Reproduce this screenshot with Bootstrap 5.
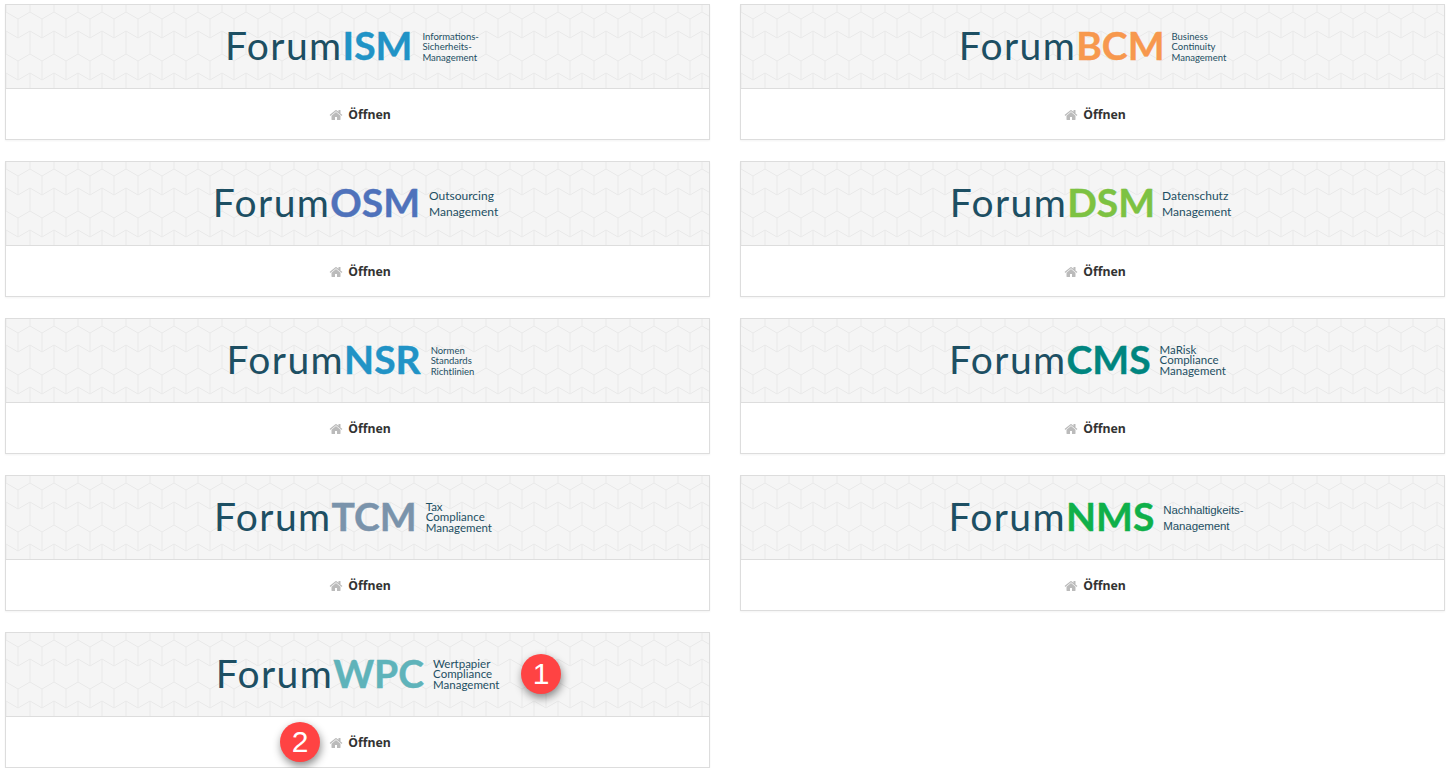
<!DOCTYPE html>
<html lang="de">
<head>
<meta charset="utf-8">
<title>Foren</title>
<link href="https://cdn.jsdelivr.net/npm/bootstrap@5.3.0/dist/css/bootstrap.min.css" rel="stylesheet">
<style>
body{background:#fff;overflow:hidden;font-family:"Noto Sans",sans-serif}
.page-wrap{padding:4px 5px 0}
.page-grid{--bs-gutter-x:30px;--bs-gutter-y:21px}
.forum-card{border:1px solid #ddd;border-radius:0;box-shadow:0 1px 2px rgba(0,0,0,.05)}
.forum-head{height:84px;padding-bottom:2px;background-color:#f5f5f5;border-bottom:1px solid #ddd;background-image:url("data:image/svg+xml,%3Csvg xmlns='http://www.w3.org/2000/svg' width='24' height='42'%3E%3Cpath d='M0 7L12 0L24 7M0 7V26M24 7V26M0 26L12 19L24 26M12 19V42' fill='none' stroke='%23e9e9e9' stroke-width='1'/%3E%3C/svg%3E");background-position:12px 7px}
.forum-foot{height:50px;padding:2px 0 0 5px;font-size:12.3px;font-weight:700;color:#333}
.home-ico{width:14px;height:14px;fill:#bbb;margin-right:5px}
.logo-name{font-family:"Lato",sans-serif;font-size:39px;line-height:1;color:#1d4f63;letter-spacing:1.4px}
.logo-name b{font-weight:700;letter-spacing:0;-webkit-text-stroke:.4px currentColor}
.logo-sub{font-family:"Lato",sans-serif;color:#1d4f63;font-size:9.5px;line-height:10.3px;margin:4px 0 0 10px}
.logo-sub.mid{font-size:11.5px;margin:2px 0 0 9px}
.logo-sub.two{font-size:12px;line-height:16px;margin:2px 0 0 9px}
.logo-sub.arial{font-family:"Liberation Sans",sans-serif;font-size:11.5px;letter-spacing:-.1px}
.logo-sub.tight{margin-left:7px}
.c-ism{color:#2193c6}.c-bcm{color:#f7984e}.c-osm{color:#4f72bb}.c-dsm{color:#7dc242}.c-nsr{color:#2193c6}.c-cms{color:#00857f}.c-tcm{color:#7a93ab}.c-nms{color:#10b04a}.c-wpc{color:#5fb3ba}
.s-ism{padding-right:11px}.s-osm{padding-right:4px}.s-dsm{padding-right:4px}.s-nsr{padding-right:14px}.s-cms{padding-right:10px}.s-tcm{padding-right:9px}.s-nms{padding-left:7px}
.step-dot{position:absolute;width:40px;height:40px;border-radius:50%;background:#ff4343;color:#fff;font-family:"Liberation Sans",sans-serif;font-size:30px;line-height:40px;text-align:center;box-shadow:1px 4px 8px rgba(0,0,0,.45)}
.dot-one{left:515px;top:21px}
.dot-two{left:274px;top:89px}
</style>
</head>
<body>
<svg width="0" height="0" class="position-absolute"><symbol id="home" viewBox="0 0 1792 1792"><path d="M1472 992v480q0 26-19 45t-45 19h-384v-384H768v384H384q-26 0-45-19t-19-45V992q0-1 .5-3t.5-3l575-474 575 474q1 2 1 6zm223-69-62 74q-8 9-21 11h-3q-13 0-21-7L896 424l-692 577q-12 8-24 7-13-2-21-11l-62-74q-8-10-7-23.500t11-21.500l719-599q32-26 76-26t76 26l244 204V288q0-14 9-23t23-9h192q14 0 23 9t9 23v408l219 182q10 8 11 21.500t-7 23.500z"/></symbol></svg>
<div class="container-fluid page-wrap">
<div class="row page-grid">
<div class="col-6"><div class="card forum-card"><div class="forum-head s-ism d-flex align-items-center justify-content-center"><div class="logo-name">Forum<b class="c-ism">ISM</b></div><div class="logo-sub">Informations-<br>Sicherheits-<br>Management</div></div><div class="forum-foot d-flex align-items-center justify-content-center"><svg class="home-ico"><use href="#home"/></svg>Öffnen</div></div></div>
<div class="col-6"><div class="card forum-card"><div class="forum-head d-flex align-items-center justify-content-center"><div class="logo-name">Forum<b class="c-bcm">BCM</b></div><div class="logo-sub tight">Business<br>Continuity<br>Management</div></div><div class="forum-foot d-flex align-items-center justify-content-center"><svg class="home-ico"><use href="#home"/></svg>Öffnen</div></div></div>
<div class="col-6"><div class="card forum-card"><div class="forum-head s-osm d-flex align-items-center justify-content-center"><div class="logo-name">Forum<b class="c-osm">OSM</b></div><div class="logo-sub two">Outsourcing<br>Management</div></div><div class="forum-foot d-flex align-items-center justify-content-center"><svg class="home-ico"><use href="#home"/></svg>Öffnen</div></div></div>
<div class="col-6"><div class="card forum-card"><div class="forum-head s-dsm d-flex align-items-center justify-content-center"><div class="logo-name">Forum<b class="c-dsm">DSM</b></div><div class="logo-sub two tight">Datenschutz<br>Management</div></div><div class="forum-foot d-flex align-items-center justify-content-center"><svg class="home-ico"><use href="#home"/></svg>Öffnen</div></div></div>
<div class="col-6"><div class="card forum-card"><div class="forum-head s-nsr d-flex align-items-center justify-content-center"><div class="logo-name">Forum<b class="c-nsr">NSR</b></div><div class="logo-sub">Normen<br>Standards<br>Richtlinien</div></div><div class="forum-foot d-flex align-items-center justify-content-center"><svg class="home-ico"><use href="#home"/></svg>Öffnen</div></div></div>
<div class="col-6"><div class="card forum-card"><div class="forum-head s-cms d-flex align-items-center justify-content-center"><div class="logo-name">Forum<b class="c-cms">CMS</b></div><div class="logo-sub mid">MaRisk<br>Compliance<br>Management</div></div><div class="forum-foot d-flex align-items-center justify-content-center"><svg class="home-ico"><use href="#home"/></svg>Öffnen</div></div></div>
<div class="col-6"><div class="card forum-card"><div class="forum-head s-tcm d-flex align-items-center justify-content-center"><div class="logo-name">Forum<b class="c-tcm">TCM</b></div><div class="logo-sub mid">Tax<br>Compliance<br>Management</div></div><div class="forum-foot d-flex align-items-center justify-content-center"><svg class="home-ico"><use href="#home"/></svg>Öffnen</div></div></div>
<div class="col-6"><div class="card forum-card"><div class="forum-head s-nms d-flex align-items-center justify-content-center"><div class="logo-name">Forum<b class="c-nms">NMS</b></div><div class="logo-sub two arial">Nachhaltigkeits-<br>Management</div></div><div class="forum-foot d-flex align-items-center justify-content-center"><svg class="home-ico"><use href="#home"/></svg>Öffnen</div></div></div>
<div class="col-6"><div class="card forum-card position-relative"><div class="forum-head d-flex align-items-center justify-content-center"><div class="logo-name">Forum<b class="c-wpc">WPC</b></div><div class="logo-sub mid">Wertpapier<br>Compliance<br>Management</div></div><div class="forum-foot d-flex align-items-center justify-content-center"><svg class="home-ico"><use href="#home"/></svg>Öffnen</div><span class="step-dot dot-one">1</span><span class="step-dot dot-two">2</span></div></div>
</div>
</div>
</body>
</html>
